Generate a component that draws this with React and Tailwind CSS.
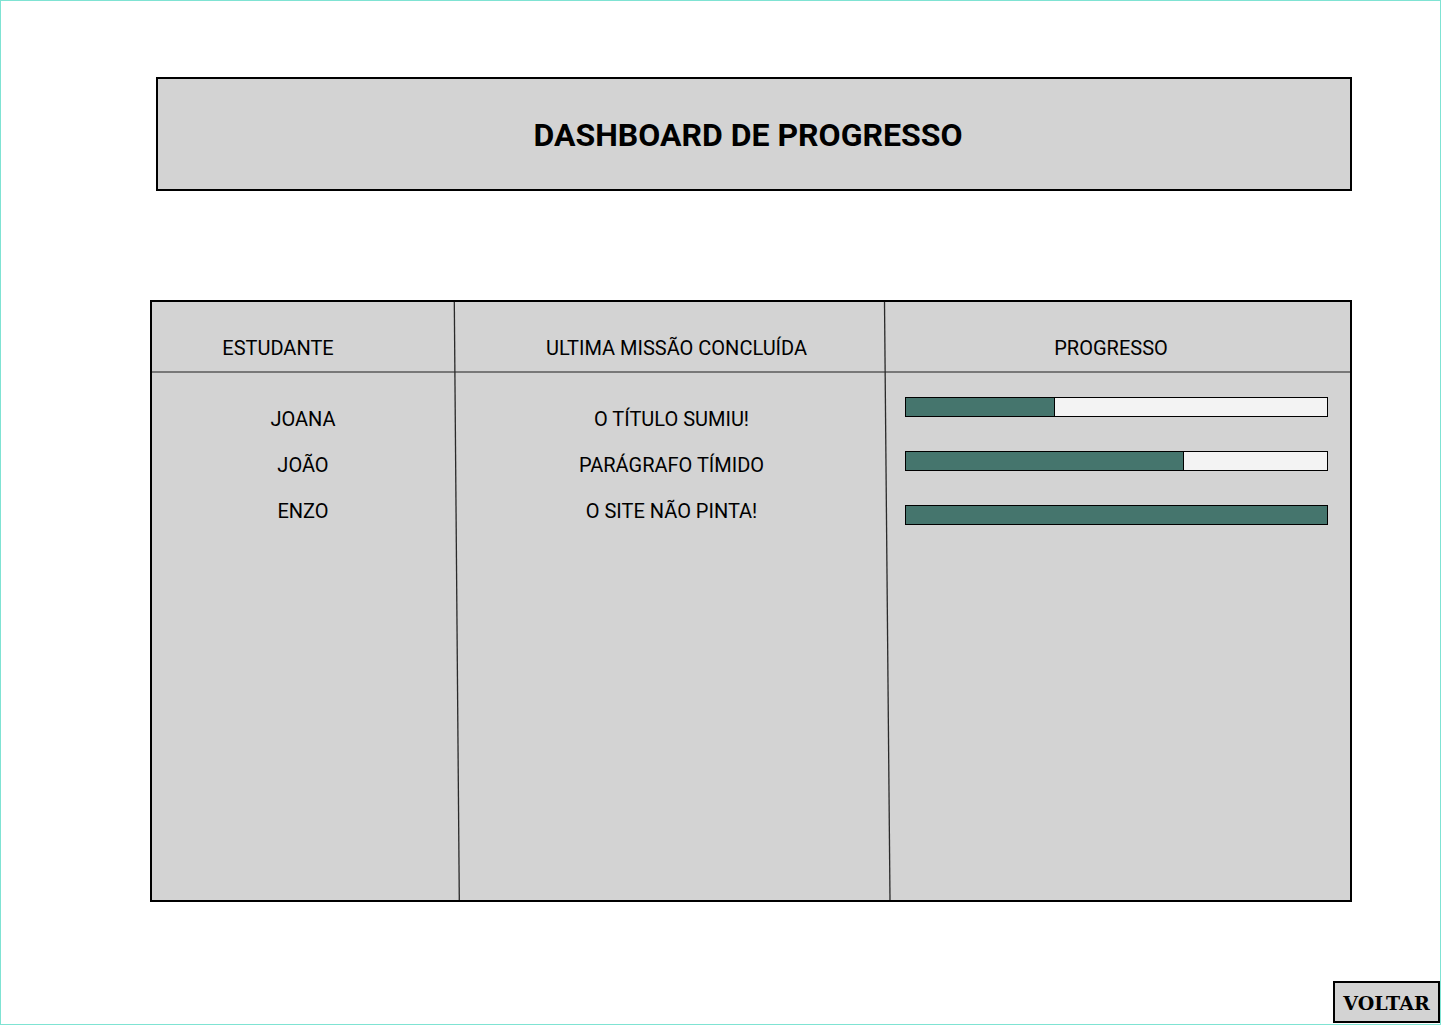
import React from "react";

const students = [
  { name: "JOANA", mission: "O TÍTULO SUMIU!", pct: 35.5 },
  { name: "JOÃO", mission: "PARÁGRAFO TÍMIDO", pct: 66 },
  { name: "ENZO", mission: "O SITE NÃO PINTA!", pct: 100 },
];

export default function App() {
  return (
    <div
      className="w-[1441px] h-[1025px] border border-[#7fe3d3] bg-white flex flex-col text-black"
      style={{ fontFamily: "Roboto, 'Liberation Sans', sans-serif" }}
    >
      <div className="ml-[155px] mt-[76px] w-[1196px] h-[114px] border-2 border-black bg-[#d3d3d3] flex items-center justify-center">
        <h1 className="text-[32px] font-bold leading-none pr-[12px] pt-[2px]">DASHBOARD DE PROGRESSO</h1>
      </div>

      <div className="ml-[149px] mt-[109px] w-[1202px] h-[602px] border-2 border-black bg-[#d3d3d3]">
        <div className="relative w-full h-full grid grid-cols-[302px_430px_1fr] grid-rows-[70px_1fr]">
          <div className="flex items-end justify-center pr-[50px] pb-[12px] text-[20px] leading-[23px]">ESTUDANTE</div>
          <div className="flex items-end justify-center pl-[15px] pb-[12px] text-[20px] leading-[23px]">ULTIMA MISSÃO CONCLUÍDA</div>
          <div className="flex items-end justify-center pr-[12px] pb-[12px] text-[20px] leading-[23px]">PROGRESSO</div>

          <div className="flex flex-col items-center pt-[36px] gap-[23px] text-[20px] leading-[23px]">
            {students.map((s) => (
              <div key={s.name}>{s.name}</div>
            ))}
          </div>
          <div className="flex flex-col items-center pt-[36px] pl-[5px] gap-[23px] text-[20px] leading-[23px]">
            {students.map((s) => (
              <div key={s.name}>{s.mission}</div>
            ))}
          </div>
          <div className="flex flex-col pt-[25px] pl-[21px] pr-[22px] gap-[34px]">
            {students.map((s) => (
              <div key={s.name} className="h-[20px] border border-black bg-[#f3f3f3] flex">
                <div
                  className={`h-full bg-[#45756d] ${s.pct < 100 ? "border-r border-black" : ""}`}
                  style={{ width: `${s.pct}%` }}
                />
              </div>
            ))}
          </div>

          <svg
            className="absolute inset-0 w-full h-full pointer-events-none"
            viewBox="0 0 1198 598"
            preserveAspectRatio="none"
          >
            <line x1="0" y1="70" x2="1198" y2="70" stroke="#1f1f1f" strokeWidth="1.2" />
            <line x1="302.3" y1="0" x2="307.3" y2="598" stroke="#2a2a2a" strokeWidth="1.3" />
            <line x1="732.5" y1="0" x2="738" y2="598" stroke="#2a2a2a" strokeWidth="1.3" />
          </svg>
        </div>
      </div>

      <div className="flex justify-end mt-[79px]">
        <button
          className="w-[107px] h-[42px] border-2 border-black bg-[#d3d3d3] flex items-center justify-center font-bold text-[19px] leading-none pt-[2px]"
          style={{ fontFamily: "'DejaVu Serif', serif" }}
        >
          VOLTAR
        </button>
      </div>
    </div>
  );
}
